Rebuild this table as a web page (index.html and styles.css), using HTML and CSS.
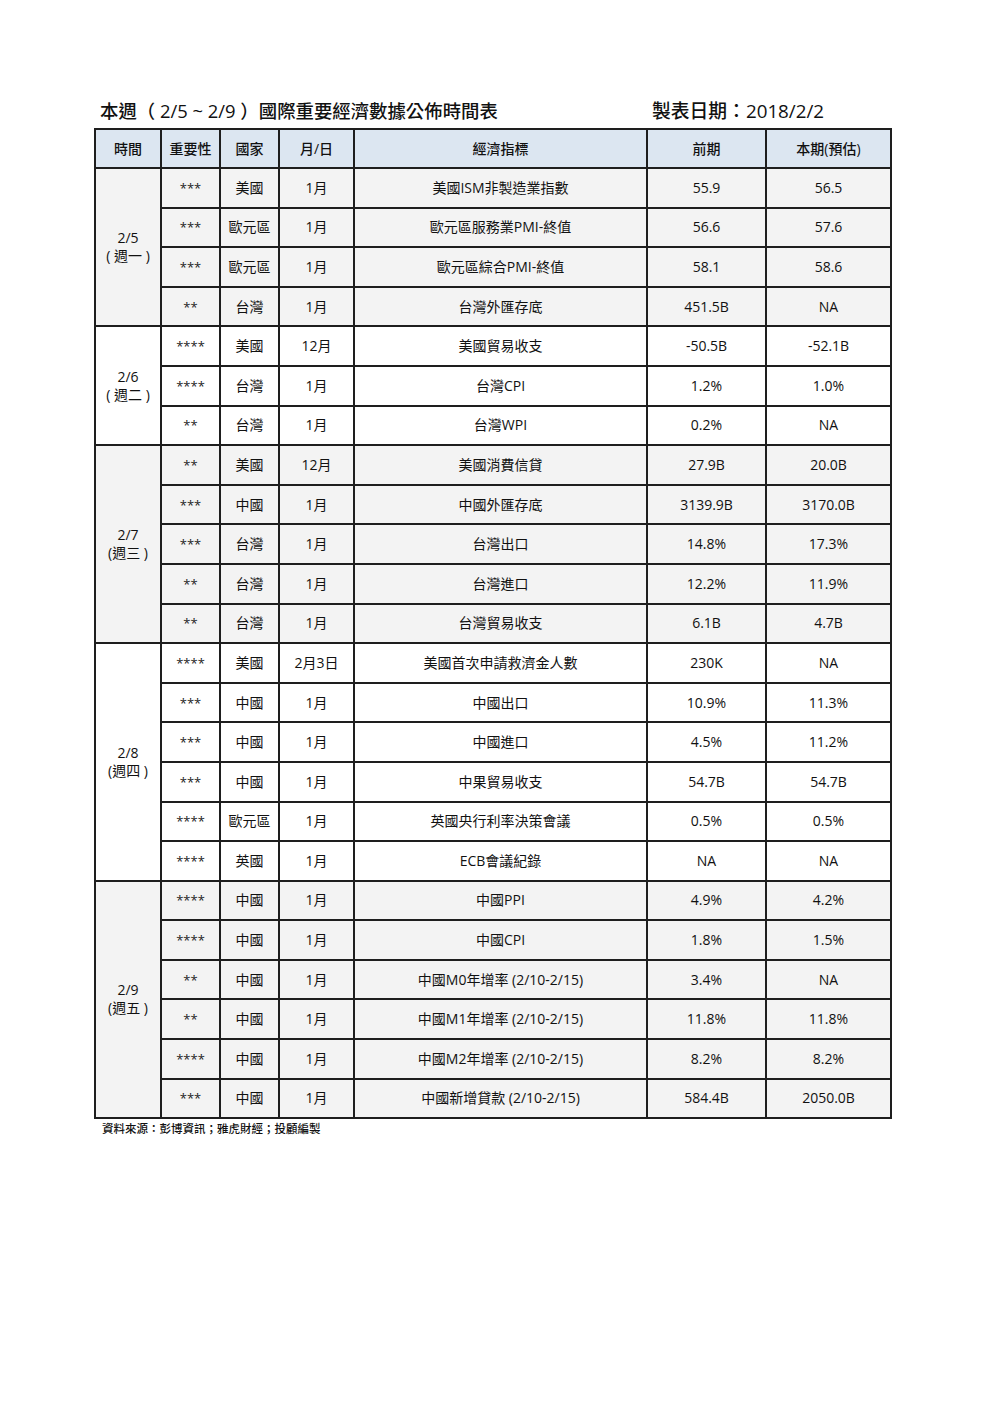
FILE: index.html
```html
<!DOCTYPE html>
<html lang="zh-Hant">
<head>
<meta charset="utf-8">
<title>本週國際重要經濟數據公佈時間表</title>
<link rel="stylesheet" href="styles.css">
</head>
<body>
<div class="page">
  <div class="title-row">
    <h1 class="title">本週（ 2/5 ~ 2/9 ）國際重要經濟數據公佈時間表</h1>
    <div class="made-date">製表日期：2018/2/2</div>
  </div>
  <table class="schedule">
    <colgroup>
      <col class="c-time"><col class="c-imp"><col class="c-country"><col class="c-md"><col class="c-ind"><col class="c-prev"><col class="c-est">
    </colgroup>
    <thead>
      <tr><th>時間</th><th>重要性</th><th>國家</th><th>月/日</th><th>經濟指標</th><th>前期</th><th>本期(預估)</th></tr>
    </thead>
    <tbody class="g-gray">
      <tr><td rowspan="4" class="day">2/5<br>( 週一 )</td><td class="star">***</td><td>美國</td><td>1月</td><td>美國ISM非製造業指數</td><td>55.9</td><td>56.5</td></tr>
      <tr><td class="star">***</td><td>歐元區</td><td>1月</td><td>歐元區服務業PMI-終值</td><td>56.6</td><td>57.6</td></tr>
      <tr><td class="star">***</td><td>歐元區</td><td>1月</td><td>歐元區綜合PMI-終值</td><td>58.1</td><td>58.6</td></tr>
      <tr><td class="star">**</td><td>台灣</td><td>1月</td><td>台灣外匯存底</td><td>451.5B</td><td>NA</td></tr>
    </tbody>
    <tbody class="g-white">
      <tr><td rowspan="3" class="day">2/6<br>( 週二 )</td><td class="star">****</td><td>美國</td><td>12月</td><td>美國貿易收支</td><td>-50.5B</td><td>-52.1B</td></tr>
      <tr><td class="star">****</td><td>台灣</td><td>1月</td><td>台灣CPI</td><td>1.2%</td><td>1.0%</td></tr>
      <tr><td class="star">**</td><td>台灣</td><td>1月</td><td>台灣WPI</td><td>0.2%</td><td>NA</td></tr>
    </tbody>
    <tbody class="g-gray">
      <tr><td rowspan="5" class="day">2/7<br>(週三 )</td><td class="star">**</td><td>美國</td><td>12月</td><td>美國消費信貸</td><td>27.9B</td><td>20.0B</td></tr>
      <tr><td class="star">***</td><td>中國</td><td>1月</td><td>中國外匯存底</td><td>3139.9B</td><td>3170.0B</td></tr>
      <tr><td class="star">***</td><td>台灣</td><td>1月</td><td>台灣出口</td><td>14.8%</td><td>17.3%</td></tr>
      <tr><td class="star">**</td><td>台灣</td><td>1月</td><td>台灣進口</td><td>12.2%</td><td>11.9%</td></tr>
      <tr><td class="star">**</td><td>台灣</td><td>1月</td><td>台灣貿易收支</td><td>6.1B</td><td>4.7B</td></tr>
    </tbody>
    <tbody class="g-white">
      <tr><td rowspan="6" class="day">2/8<br>(週四 )</td><td class="star">****</td><td>美國</td><td>2月3日</td><td>美國首次申請救濟金人數</td><td>230K</td><td>NA</td></tr>
      <tr><td class="star">***</td><td>中國</td><td>1月</td><td>中國出口</td><td>10.9%</td><td>11.3%</td></tr>
      <tr><td class="star">***</td><td>中國</td><td>1月</td><td>中國進口</td><td>4.5%</td><td>11.2%</td></tr>
      <tr><td class="star">***</td><td>中國</td><td>1月</td><td>中果貿易收支</td><td>54.7B</td><td>54.7B</td></tr>
      <tr><td class="star">****</td><td>歐元區</td><td>1月</td><td>英國央行利率決策會議</td><td>0.5%</td><td>0.5%</td></tr>
      <tr><td class="star">****</td><td>英國</td><td>1月</td><td>ECB會議紀錄</td><td>NA</td><td>NA</td></tr>
    </tbody>
    <tbody class="g-gray">
      <tr><td rowspan="6" class="day">2/9<br>(週五 )</td><td class="star">****</td><td>中國</td><td>1月</td><td>中國PPI</td><td>4.9%</td><td>4.2%</td></tr>
      <tr><td class="star">****</td><td>中國</td><td>1月</td><td>中國CPI</td><td>1.8%</td><td>1.5%</td></tr>
      <tr><td class="star">**</td><td>中國</td><td>1月</td><td>中國M0年增率 (2/10-2/15)</td><td>3.4%</td><td>NA</td></tr>
      <tr><td class="star">**</td><td>中國</td><td>1月</td><td>中國M1年增率 (2/10-2/15)</td><td>11.8%</td><td>11.8%</td></tr>
      <tr><td class="star">****</td><td>中國</td><td>1月</td><td>中國M2年增率 (2/10-2/15)</td><td>8.2%</td><td>8.2%</td></tr>
      <tr><td class="star">***</td><td>中國</td><td>1月</td><td>中國新增貸款 (2/10-2/15)</td><td>584.4B</td><td>2050.0B</td></tr>
    </tbody>
  </table>
  <p class="source">資料來源：彭博資訊；雅虎財經；投顧編製</p>
</div>
</body>
</html>
```

FILE: styles.css
```css
html, body {
  margin: 0;
  padding: 0;
  background: #ffffff;
}

body {
  font-family: "Open Sans", "Noto Sans CJK TC", sans-serif;
  color: #111111;
}

.page {
  padding: 98px 0 0 94px;
}

.title-row {
  display: flex;
  align-items: center;
  height: 26px;
  margin-bottom: 4px;
}

.title {
  margin: 0 0 0 6px;
  font-size: 18.4px;
  font-weight: 500;
  line-height: 26px;
  width: 552px;
}

.made-date {
  font-size: 18.8px;
  font-weight: 500;
  line-height: 26px;
}

.schedule {
  border-collapse: collapse;
  table-layout: fixed;
  width: 796px;
  font-size: 14px;
  line-height: 18px;
}

.c-time { width: 66px; }
.c-imp { width: 59px; }
.c-country { width: 59px; }
.c-md { width: 75px; }
.c-ind { width: 293px; }
.c-prev { width: 119px; }
.c-est { width: 125px; }

.schedule th,
.schedule td {
  border: 2px solid #1e1e1e;
  text-align: center;
  vertical-align: middle;
  padding: 0;
  height: 37.6px;
  font-weight: 400;
}

.schedule thead th {
  background: #dce6f1;
  font-weight: 500;
  height: 37px;
}

.g-gray td {
  background: #f3f3f3;
}

.g-white td {
  background: #ffffff;
}

.schedule td.star {
  font-size: 13px;
  color: #222222;
}

.schedule td.day {
  line-height: 18px;
}

.source {
  margin: 2px 0 0 8px;
  font-size: 11.5px;
  line-height: 16px;
  font-weight: 500;
}
```
